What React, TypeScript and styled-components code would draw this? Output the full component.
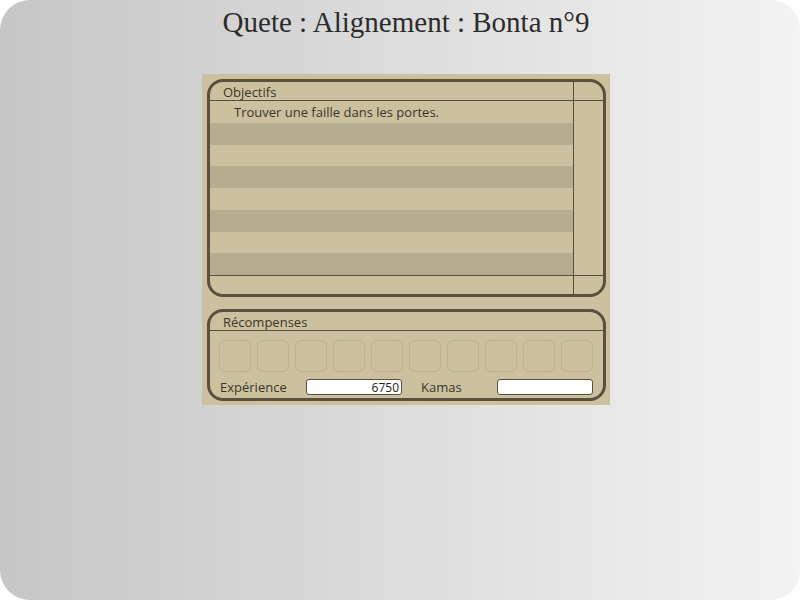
import React from 'react';
import styled, { createGlobalStyle } from 'styled-components';

const GlobalStyle = createGlobalStyle`
  html, body {
    margin: 0;
    padding: 0;
    background: #ffffff;
  }
`;

const Page = styled.div`
  width: 800px;
  height: 600px;
  box-sizing: border-box;
  padding-left: 12px;
  border-radius: 30px;
  background: linear-gradient(to right, #c6c6c6, #f3f3f3);
  overflow: hidden;
  display: flex;
  flex-direction: column;
  align-items: center;
`;

const Title = styled.h1`
  margin: 4px 0 0;
  height: 70px;
  font-family: 'Palatino Linotype', 'Book Antiqua', 'Liberation Serif', serif;
  font-weight: normal;
  font-size: 29px;
  line-height: 36px;
  color: #2c2c2c;
`;

const Panel = styled.div`
  width: 408px;
  height: 331px;
  box-sizing: border-box;
  padding: 5px 4px 4px 5px;
  background: #cbc19f;
  display: flex;
  flex-direction: column;
  gap: 12px;
  font-family: 'Open Sans', 'DejaVu Sans', sans-serif;
  font-size: 13px;
  color: #3b3528;
`;

const Frame = styled.div<{ $height: number }>`
  height: ${(p) => p.$height}px;
  box-sizing: border-box;
  border: 3px solid #5b4f3d;
  border-radius: 16px;
  overflow: hidden;
  display: flex;
  flex-direction: column;
`;

const FrameHeader = styled.div`
  height: 18px;
  flex: none;
  padding-left: 13px;
  line-height: 20px;
  border-bottom: 1px solid #5b4f3d;
`;

const ObjectivesHeader = styled(FrameHeader)`
  display: grid;
  grid-template-columns: 363px 1px 1fr;
  padding-left: 0;
`;

const HeaderLabel = styled.span`
  padding-left: 13px;
`;

const VLine = styled.div`
  background: #5b4f3d;
`;

const Body = styled.div`
  flex: 1;
  display: grid;
  grid-template-columns: 363px 1px 1fr;
`;

const Rows = styled.div`
  display: flex;
  flex-direction: column;
  border-bottom: 1px solid #5b4f3d;
`;

const Row = styled.div<{ $dark: boolean }>`
  height: 21.75px;
  padding-left: 24px;
  line-height: 22px;
  background: ${(p) => (p.$dark ? '#b6ad8f' : 'transparent')};
`;

const Side = styled.div`
  border-bottom: 1px solid #5b4f3d;
`;

const Footer = styled.div`
  height: 18px;
  display: grid;
  grid-template-columns: 363px 1px 1fr;
`;

const Slots = styled.div`
  display: flex;
  gap: 6px;
  padding: 9px 0 0 9px;
`;

const Slot = styled.div`
  width: 32px;
  height: 32px;
  box-sizing: border-box;
  border: 1px solid #bbb292;
  border-radius: 6px;
`;

const Stats = styled.div`
  display: flex;
  align-items: center;
  padding: 6px 0 0 10px;
`;

const Label = styled.span<{ $width: number }>`
  width: ${(p) => p.$width}px;
`;

const Field = styled.div`
  width: 96px;
  height: 16px;
  box-sizing: border-box;
  border: 1px solid #5b4f3d;
  border-radius: 3px;
  background: #ffffff;
  color: #222;
  font-size: 12px;
  text-align: right;
  padding-right: 2px;
  line-height: 15px;
`;

const Gap = styled.div<{ $width: number }>`
  width: ${(p) => p.$width}px;
`;

const rows = ['Trouver une faille dans les portes.', '', '', '', '', '', '', ''];

export default function App() {
  return (
    <>
      <GlobalStyle />
      <Page>
        <Title>Quete : Alignement : Bonta n°9</Title>
        <Panel>
          <Frame $height={218}>
            <ObjectivesHeader>
              <HeaderLabel>Objectifs</HeaderLabel>
              <VLine />
              <div />
            </ObjectivesHeader>
            <Body>
              <Rows>
                {rows.map((text, i) => (
                  <Row key={i} $dark={i % 2 === 1}>
                    {text}
                  </Row>
                ))}
              </Rows>
              <VLine />
              <Side />
            </Body>
            <Footer>
              <div />
              <VLine />
              <div />
            </Footer>
          </Frame>
          <Frame $height={92}>
            <FrameHeader>Récompenses</FrameHeader>
            <Slots>
              {Array.from({ length: 10 }).map((_, i) => (
                <Slot key={i} />
              ))}
            </Slots>
            <Stats>
              <Label $width={86}>Expérience</Label>
              <Field>6750</Field>
              <Gap $width={19} />
              <Label $width={76}>Kamas</Label>
              <Field />
            </Stats>
          </Frame>
        </Panel>
      </Page>
    </>
  );
}
